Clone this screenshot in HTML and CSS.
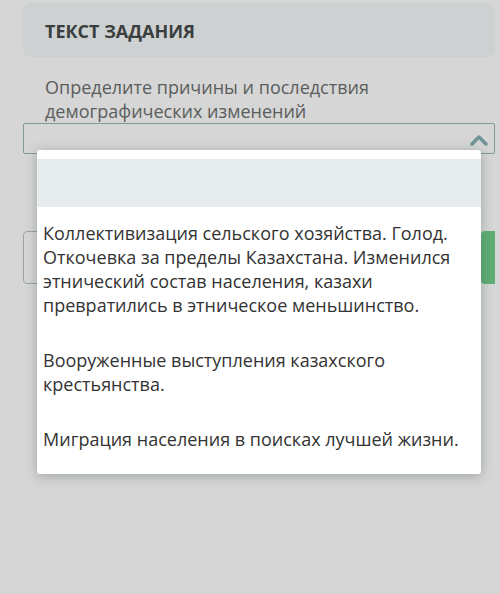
FILE: index.html
```html
<!DOCTYPE html>
<html lang="ru">

<head>
    <meta charset="UTF-8">
    <meta name="viewport" content="width=device-width, initial-scale=1.0">
    <title>Текст задания</title>
    <link rel="stylesheet" href="styles.css">
</head>

<body>
    <div class="page">
        <div class="task-header">ТЕКСТ ЗАДАНИЯ</div>

        <div class="question">Определите причины и последствия демографических изменений</div>

        <div class="select">
            <svg class="chevron" width="18" height="12" viewBox="0 0 18 12">
                <path d="M2 10 L9 3 L16 10" fill="none" stroke="#6f9496" stroke-width="3.5" stroke-linecap="round" stroke-linejoin="round"/>
            </svg>
        </div>

        <div class="answer-row">
            <div class="answer-box"></div>
            <div class="answer-btn"></div>
        </div>

        <div class="dropdown">
            <div class="dropdown-empty"></div>
            <div class="option">Коллективизация сельского хозяйства. Голод. Откочевка за пределы Казахстана. Изменился этнический состав населения, казахи превратились в этническое меньшинство.</div>
            <div class="option">Вооруженные выступления казахского крестьянства.</div>
            <div class="option">Миграция населения в поисках лучшей жизни.</div>
        </div>
    </div>
</body>

</html>
```

FILE: styles.css
```css
body {
    margin: 0;
    background-color: #d5d6d5;
    font-family: "Open Sans", "Noto Sans", sans-serif;
}

.page {
    position: relative;
    height: 594px;
    padding: 3px 5px 0 23px;
}

.task-header {
    height: 54px;
    line-height: 56px;
    padding-left: 22px;
    background-color: #ced1d1;
    border-radius: 8px;
    font-size: 18px;
    font-weight: 700;
    color: #3b3e3e;
}

.question {
    margin-top: 18px;
    padding-left: 22px;
    padding-right: 100px;
    font-size: 18px;
    line-height: 24px;
    color: #5b5d5d;
}

.select {
    position: relative;
    height: 29px;
    border: 1px solid #7e9a99;
    border-radius: 2px;
}

.chevron {
    position: absolute;
    right: 6px;
    top: 10px;
}

.answer-row {
    display: flex;
    justify-content: space-between;
    margin-top: 77px;
    height: 53px;
}

.answer-box {
    width: 200px;
    border: 1px solid #9aa3a3;
    border-radius: 4px;
}

.answer-btn {
    width: 14px;
    background-color: #5fae74;
    border-radius: 4px 0 0 4px;
}

.dropdown {
    position: absolute;
    top: 150px;
    left: 37px;
    width: 444px;
    height: 324px;
    background-color: #fff;
    border-radius: 3px;
    box-shadow: 0 2px 12px rgba(60, 75, 75, 0.35);
}

.dropdown-empty {
    height: 48px;
    margin-top: 9px;
    background-color: #e7edef;
}

.option {
    padding: 14px 16px 14px 6px;
    font-size: 18px;
    line-height: 24px;
    color: #333;
}

.option + .option {
    margin-top: 3px;
}
```
